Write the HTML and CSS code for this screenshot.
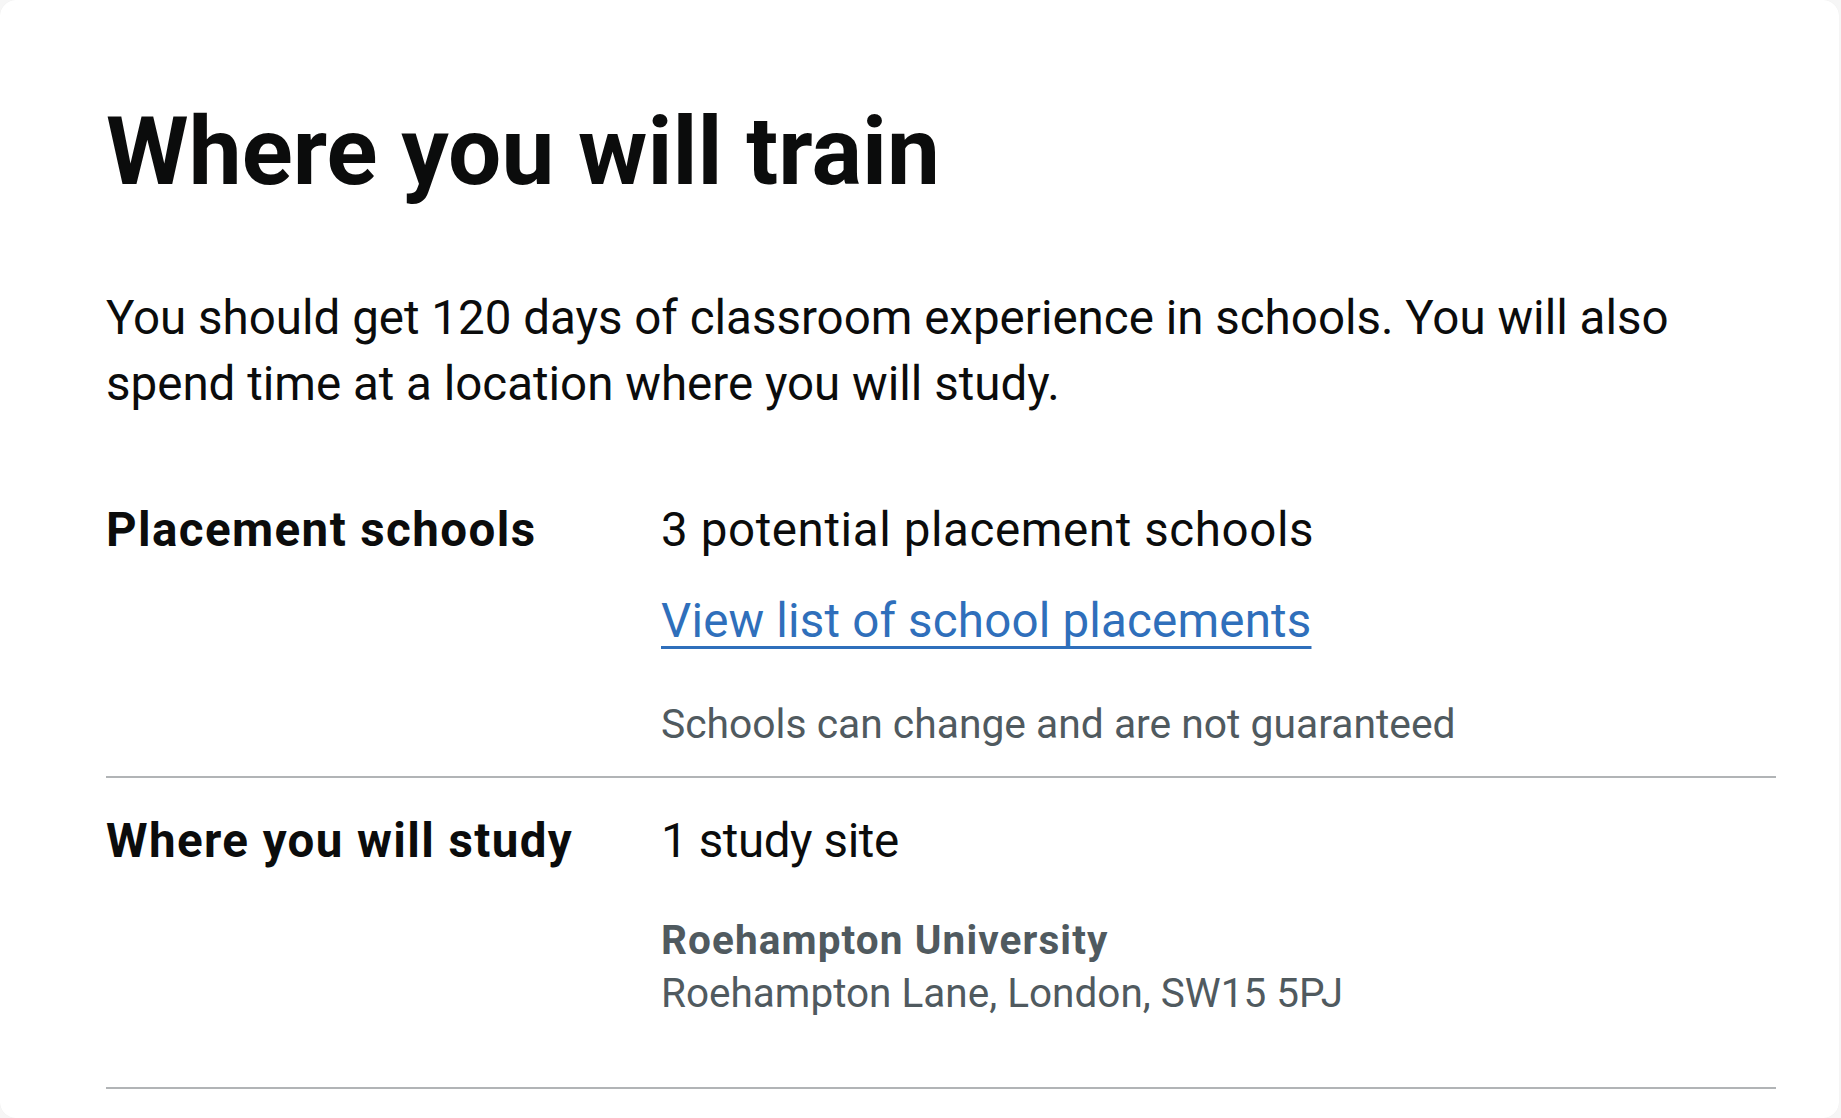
FILE: index.html
```html
<!DOCTYPE html>
<html lang="en">
<head>
<meta charset="utf-8">
<title>Where you will train</title>
<link rel="stylesheet" href="styles.css">
</head>
<body>
<main class="card">
  <h1 class="heading">Where you will train</h1>
  <p class="intro">You should get 120 days of classroom experience in schools. You will also spend time at a location where you will study.</p>
  <dl class="summary">
    <div class="row row-first">
      <dt class="key">Placement schools</dt>
      <dd class="value">
        <p class="value-text">3 potential placement schools</p>
        <p class="value-link"><a class="link" href="#">View list of school placements</a></p>
        <p class="hint">Schools can change and are not guaranteed</p>
      </dd>
    </div>
    <div class="row row-second">
      <dt class="key">Where you will study</dt>
      <dd class="value">
        <p class="value-text value-count">1 study site</p>
        <div class="site">
          <p class="site-name">Roehampton University</p>
          <p class="site-address">Roehampton Lane, London, SW15 5PJ</p>
        </div>
      </dd>
    </div>
  </dl>
</main>
</body>
</html>
```
FILE: styles.css
```css
html, body {
  margin: 0;
  padding: 0;
  height: 100%;
  overflow: hidden;
}

body {
  background: #f6f6f6;
  font-family: Roboto, "Liberation Sans", Arial, sans-serif;
  color: #0b0c0c;
}

.card {
  box-sizing: border-box;
  height: 100vh;
  margin-right: 2px;
  background: #ffffff;
  border-radius: 16px;
  box-shadow: 0 0 1px rgba(0, 0, 0, 0.06);
  padding: 99px 63px 0 106px;
}

.heading {
  margin: 0 0 81px;
  font-size: 94.4px;
  line-height: 105px;
  font-weight: 700;
  letter-spacing: 0.1px;
}

.intro {
  margin: 0 0 50px;
  font-size: 47.5px;
  line-height: 66px;
  max-width: 1600px;
}

.summary {
  margin: 0;
}

.row {
  display: grid;
  grid-template-columns: 555px 1fr;
  border-bottom: 2px solid #b1b4b6;
  padding-top: 30px;
  padding-bottom: 25px;
}

.key {
  margin: 0;
  font-size: 47.5px;
  line-height: 66px;
  font-weight: 700;
  letter-spacing: 1.4px;
}

.value {
  margin: 0;
}

.value-text {
  margin: 0 0 25px;
  font-size: 47.5px;
  line-height: 66px;
  letter-spacing: 0.6px;
}

.value-count {
  margin-bottom: 40px;
  letter-spacing: -0.4px;
}

.value-link {
  margin: 0 0 44px;
  font-size: 47.5px;
  line-height: 66px;
  letter-spacing: 0.18px;
}

.link {
  color: #2f6fbb;
  text-decoration: underline;
  text-decoration-thickness: 3px;
  text-underline-offset: 9px;
  text-decoration-skip-ink: none;
}

.hint {
  margin: 0;
  font-size: 40.8px;
  line-height: 53px;
  color: #505a5f;
}

.site {
  margin-bottom: 42px;
  color: #505a5f;
}

.site-name {
  margin: 0;
  font-size: 40.5px;
  line-height: 53px;
  font-weight: 700;
  letter-spacing: 1.1px;
}

.site-address {
  margin: 0;
  font-size: 40.5px;
  line-height: 53px;
}
```
